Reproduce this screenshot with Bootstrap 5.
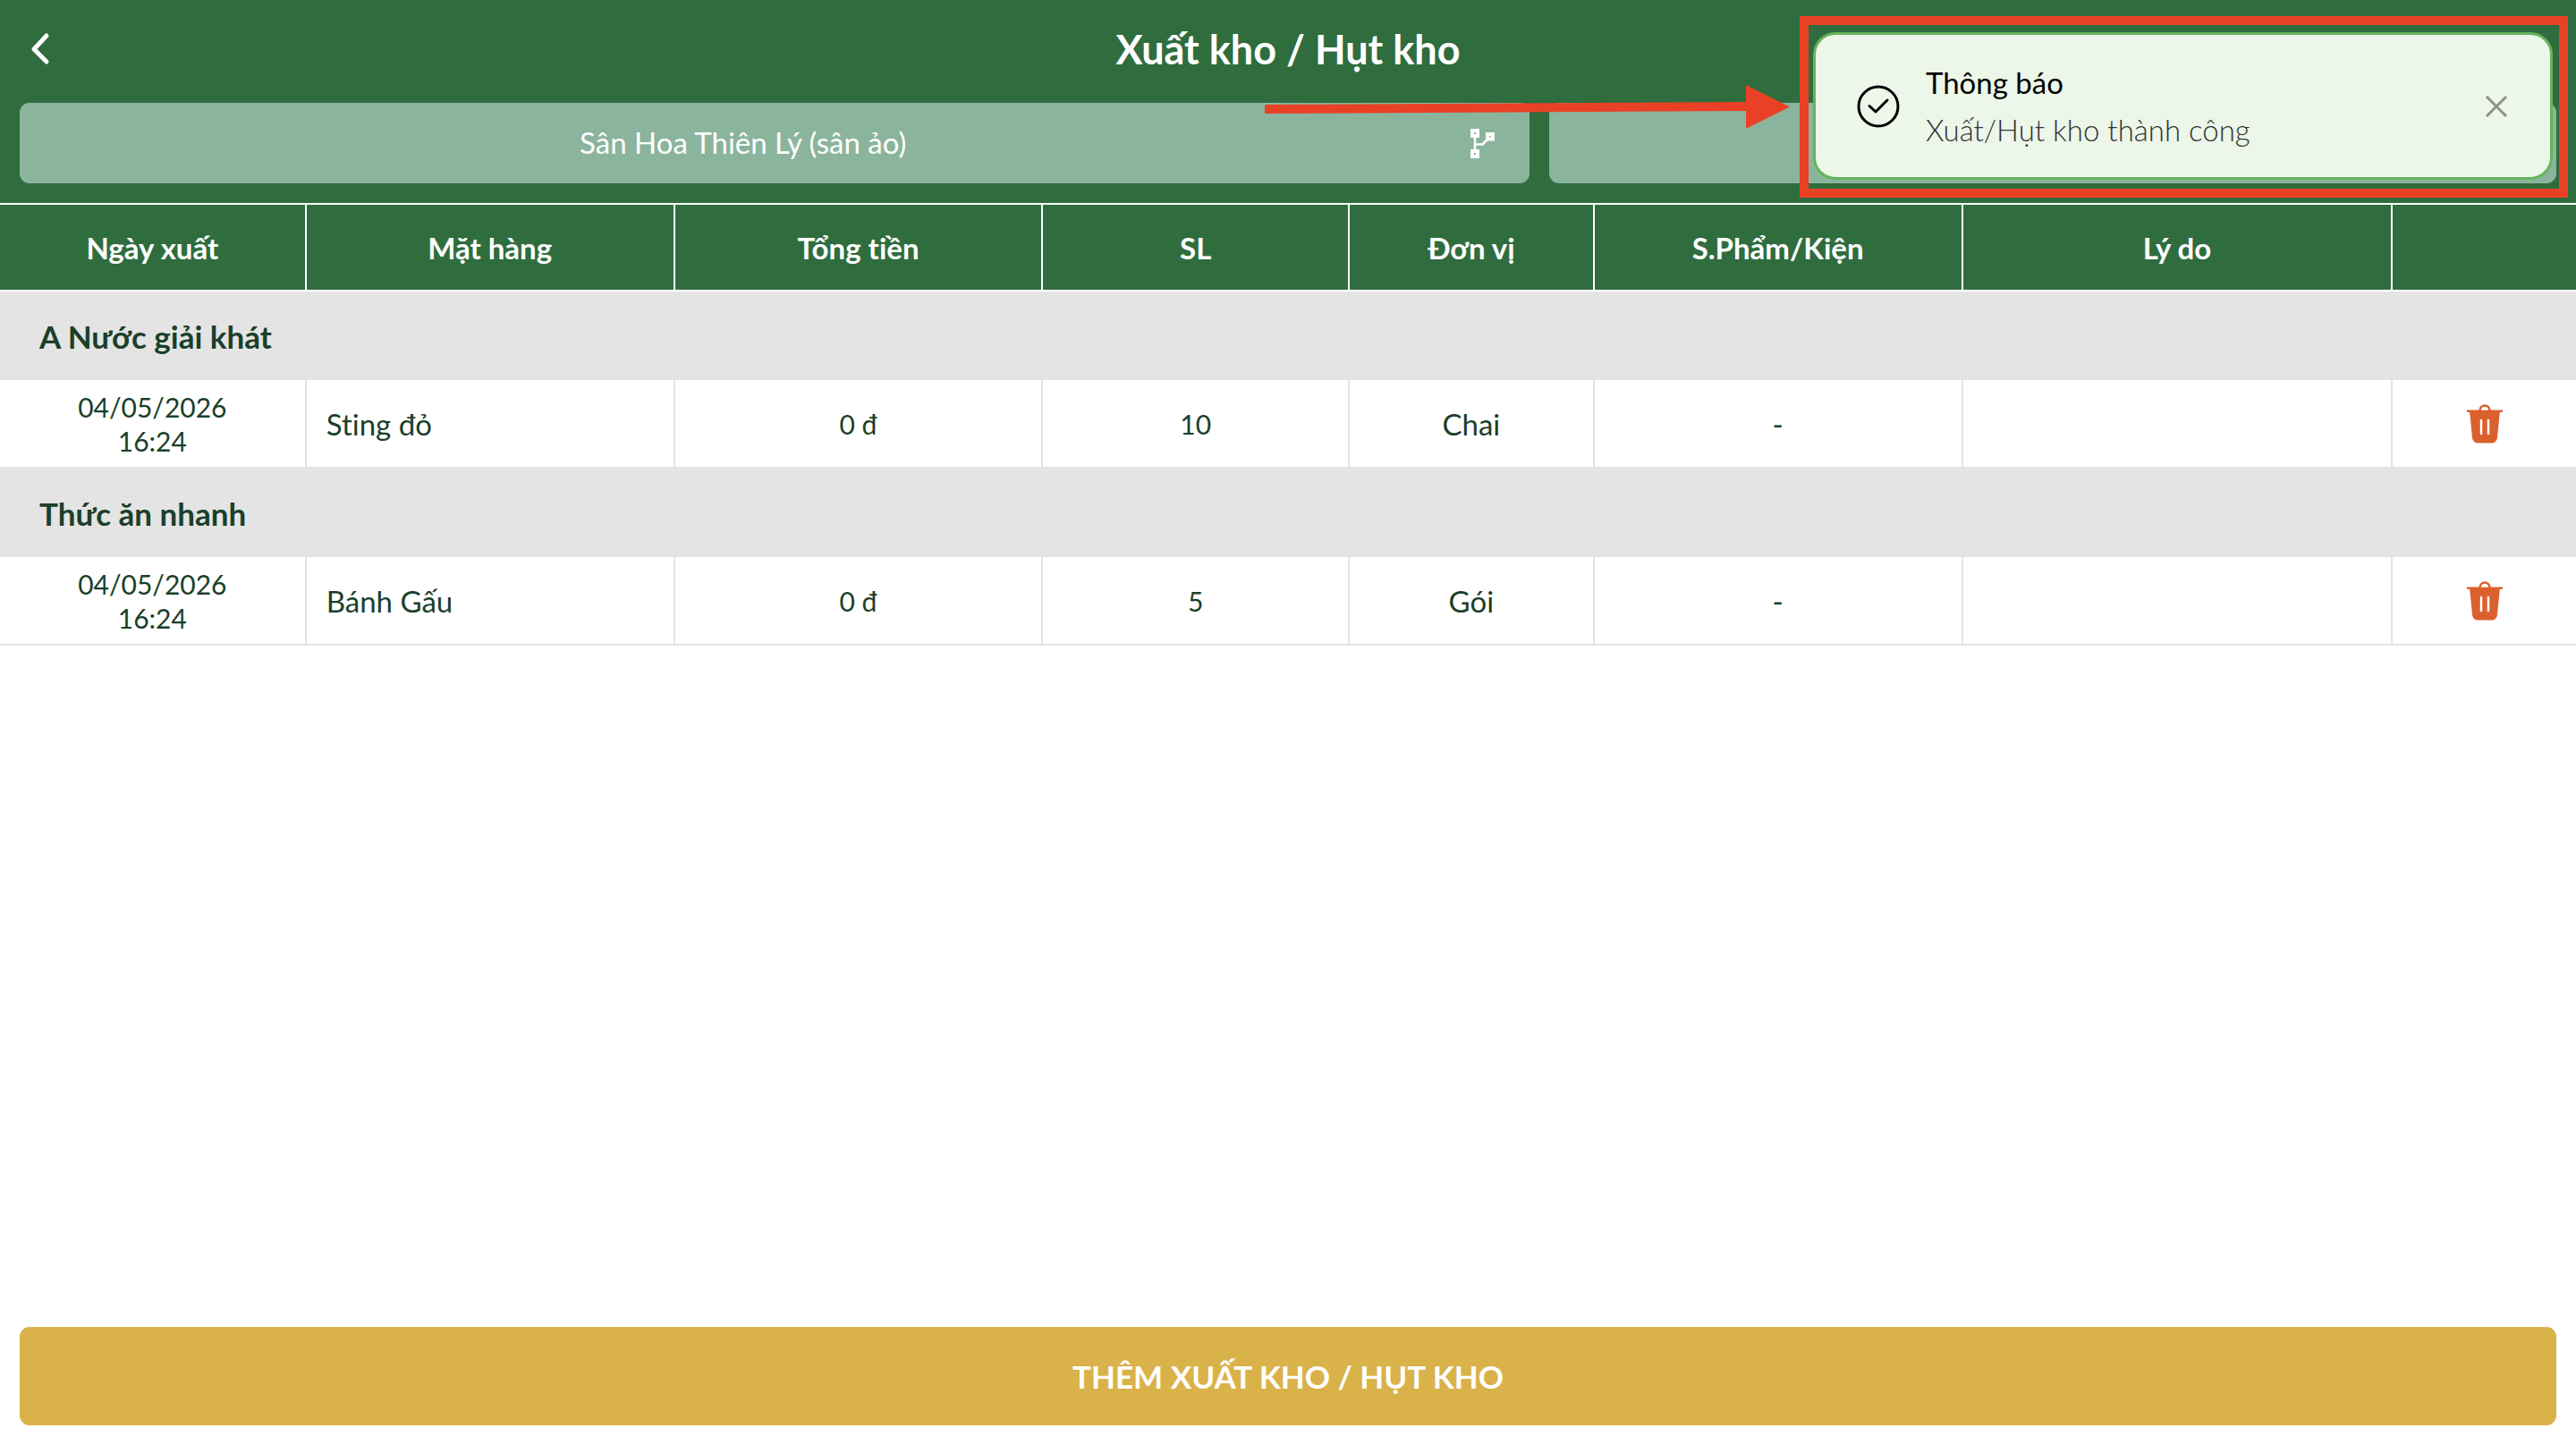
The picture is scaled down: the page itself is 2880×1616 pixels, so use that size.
<!DOCTYPE html>
<html lang="vi">
<head>
<meta charset="utf-8">
<meta name="viewport" content="width=device-width, initial-scale=1">
<title>Xuất kho / Hụt kho</title>
<link href="https://cdn.jsdelivr.net/npm/bootstrap@5.3.0/dist/css/bootstrap.min.css" rel="stylesheet">
<style>
  :root { --brand: #2f6d3e; --ink: #1b3f2a; --line: #e4e4e4; --alert: #e94126; }
  body { font-family: Lato, "Noto Sans", sans-serif; font-size: 33px; line-height: 38px; color: var(--ink); font-variant-ligatures: none; }
  .app-header { background: var(--brand); padding: 0 22px 22px; }
  .title-bar { height: 115px; padding-bottom: 6px; }
  .title-bar h1 { font-size: 45px; line-height: 56px; font-weight: 700; }
  .back-btn, .side-slot { width: 44px; height: 56px; }
  .filters { gap: 22px; }
  .filter-btn { height: 90px; padding: 0; border-radius: 11px; background: #8bb49d; color: #fff; font-size: 33px; border: 0; }
  .filter-btn:hover { background: #9bc0ab; color: #fff; }
  .filter-branch { flex: 3 1 0; }
  .filter-date { flex: 2 1 0; }
  .filter-label { padding: 0 36px; }
  .filter-icon { margin-right: 35px; }
  .stock-table { table-layout: fixed; border-collapse: separate; border-spacing: 0; }
  .stock-table th, .stock-table td { padding: 0 22px; vertical-align: middle; }
  .stock-table thead th { height: 99px; background: var(--brand); color: #fff; text-align: center; font-weight: 700; font-size: 33px;
    border-top: 2px solid #fff; border-bottom: 2px solid #fff; border-right: 2px solid #fff; }
  .stock-table thead th:last-child, .stock-table tbody td:last-child { border-right: 0; }
  .stock-table tbody td { height: 99px; text-align: center; border-right: 2px solid var(--line); border-bottom: 2px solid var(--line); }
  .stock-table .group-row th { height: 99px; background: var(--line); padding-left: 44px; font-weight: 700; font-size: 35px; text-align: left; }
  .stock-table .item-name { text-align: left; }
  .stock-table .item-num { font-size: 30px; }
  .w5 { width: 11.9%; } .w6 { width: 14.3%; } .w4 { width: 9.5%; } .w7 { width: 16.7%; } .w3 { width: 7.1%; }
  .footer-bar { padding: 22px; }
  .add-btn { height: 110px; border-radius: 11px; background: #dab24a; color: #fff; font-size: 35px; font-weight: 700; border: 0; }
  .add-btn:hover { background: #cfa63d; color: #fff; }
  .notice-layer { top: 18px; right: 9px; }
  .notice-frame { width: 859px; height: 203px; border: 10px solid var(--alert); padding: 8px 7px 10px 5px; }
  .notice { height: 100%; border: 3px solid #65b45b; border-radius: 25px; background: #ecf6e9; padding: 0 47px 0 46px; gap: 29px; color: #000; }
  .notice-body { line-height: 53px; }
  .notice-text { font-weight: 300; color: #333; }
  .pointer { width: 587px; height: 50px; margin: 77px 11px 0 0; }
  svg { display: block; flex: none; }
</style>
</head>
<body>
<div class="d-flex flex-column min-vh-100 position-relative">
  <header class="app-header">
    <div class="title-bar d-flex align-items-center justify-content-between">
      <button type="button" class="btn p-0 border-0 back-btn" aria-label="Quay lại">
        <svg width="44" height="56" viewBox="0 0 44 56" fill="none" stroke="#fff" stroke-width="5" stroke-linecap="round" stroke-linejoin="round"><path d="M30 13 16 28 30 42"/></svg>
      </button>
      <h1 class="m-0 text-white">Xuất kho / Hụt kho</h1>
      <span class="side-slot"></span>
    </div>
    <div class="filters d-flex">
      <button type="button" class="btn filter-btn filter-branch d-flex align-items-center">
        <span class="filter-label flex-grow-1">Sân Hoa Thiên Lý (sân ảo)</span>
        <svg class="filter-icon" width="36" height="36" viewBox="0 0 36 36" fill="none" stroke="#fff"><path d="M10 11v14M10 19.500h8.500L26 12" stroke-width="2.500"/><g stroke-width="4"><path d="M7 4h6v6H7zM7 27h6v6H7zM24 8h6v5.500h-6z"/></g></svg>
      </button>
      <button type="button" class="btn filter-btn filter-date" aria-label="Chọn ngày"></button>
    </div>
  </header>

  <table class="stock-table w-100">
    <colgroup><col class="w5"><col class="w6"><col class="w6"><col class="w5"><col class="w4"><col class="w6"><col class="w7"><col class="w3"></colgroup>
    <thead>
      <tr><th scope="col">Ngày xuất</th><th scope="col">Mặt hàng</th><th scope="col">Tổng tiền</th><th scope="col">SL</th><th scope="col">Đơn vị</th><th scope="col">S.Phẩm/Kiện</th><th scope="col">Lý do</th><th></th></tr>
    </thead>
    <tbody>
      <tr class="group-row"><th colspan="8" scope="rowgroup">A Nước giải khát</th></tr>
      <tr>
        <td class="item-num">04/05/2026<br>16:24</td><td class="item-name">Sting đỏ</td><td class="item-num">0 đ</td><td class="item-num">10</td><td>Chai</td><td>-</td><td></td>
        <td><button type="button" class="btn p-0 border-0" aria-label="Xóa Sting đỏ">
          <svg width="42" height="44" viewBox="0 0 42 44"><path d="M15.500 8V7a5.500 5.500 0 0 1 11 0v1" fill="none" stroke="#d9602f" stroke-width="2.500"/><path d="M1 6.500h40v2.500h-3.200L35 37.500q-.8 6-6.500 6h-15q-5.700 0-6.500-6L4.200 9H1z" fill="#dc602e"/><path d="M17 18v15M25 18v15" stroke="#fff" stroke-width="2.500" stroke-linecap="round"/><path d="M17.500 6.500a3.500 3.500 0 0 1 7 0z" fill="#fff"/></svg>
        </button></td>
      </tr>
      <tr class="group-row"><th colspan="8" scope="rowgroup">Thức ăn nhanh</th></tr>
      <tr>
        <td class="item-num">04/05/2026<br>16:24</td><td class="item-name">Bánh Gấu</td><td class="item-num">0 đ</td><td class="item-num">5</td><td>Gói</td><td>-</td><td></td>
        <td><button type="button" class="btn p-0 border-0" aria-label="Xóa Bánh Gấu">
          <svg width="42" height="44" viewBox="0 0 42 44"><path d="M15.500 8V7a5.500 5.500 0 0 1 11 0v1" fill="none" stroke="#d9602f" stroke-width="2.500"/><path d="M1 6.500h40v2.500h-3.200L35 37.500q-.8 6-6.500 6h-15q-5.700 0-6.500-6L4.200 9H1z" fill="#dc602e"/><path d="M17 18v15M25 18v15" stroke="#fff" stroke-width="2.500" stroke-linecap="round"/><path d="M17.500 6.500a3.500 3.500 0 0 1 7 0z" fill="#fff"/></svg>
        </button></td>
      </tr>
    </tbody>
  </table>

  <footer class="footer-bar mt-auto">
    <button type="button" class="btn add-btn w-100">THÊM XUẤT KHO / HỤT KHO</button>
  </footer>

  <div class="notice-layer position-absolute d-flex align-items-start">
    <svg class="pointer" viewBox="0 0 587 50" fill="#e94126" aria-hidden="true"><path d="M0 22 538 19V0l49 24.500L538 49V29L0 32z"/></svg>
    <div class="notice-frame">
      <div class="notice d-flex align-items-center" role="alert">
        <svg width="48" height="48" viewBox="0 0 48 48" fill="none" stroke="#000" stroke-width="3" stroke-linecap="round" stroke-linejoin="round"><circle cx="24" cy="24" r="22"/><path d="m14 23.500 7 6.500L34 17"/></svg>
        <div class="notice-body flex-grow-1">
          <div>Thông báo</div>
          <div class="notice-text">Xuất/Hụt kho thành công</div>
        </div>
        <button type="button" class="btn p-0 border-0" aria-label="Đóng">
          <svg width="26" height="26" viewBox="0 0 26 26" stroke="#8c918b" stroke-width="3"><path d="m2 2 22 22M24 2 2 24"/></svg>
        </button>
      </div>
    </div>
  </div>
</div>
<script src="https://cdn.jsdelivr.net/npm/bootstrap@5.3.0/dist/js/bootstrap.bundle.min.js"></script>
</body>
</html>
